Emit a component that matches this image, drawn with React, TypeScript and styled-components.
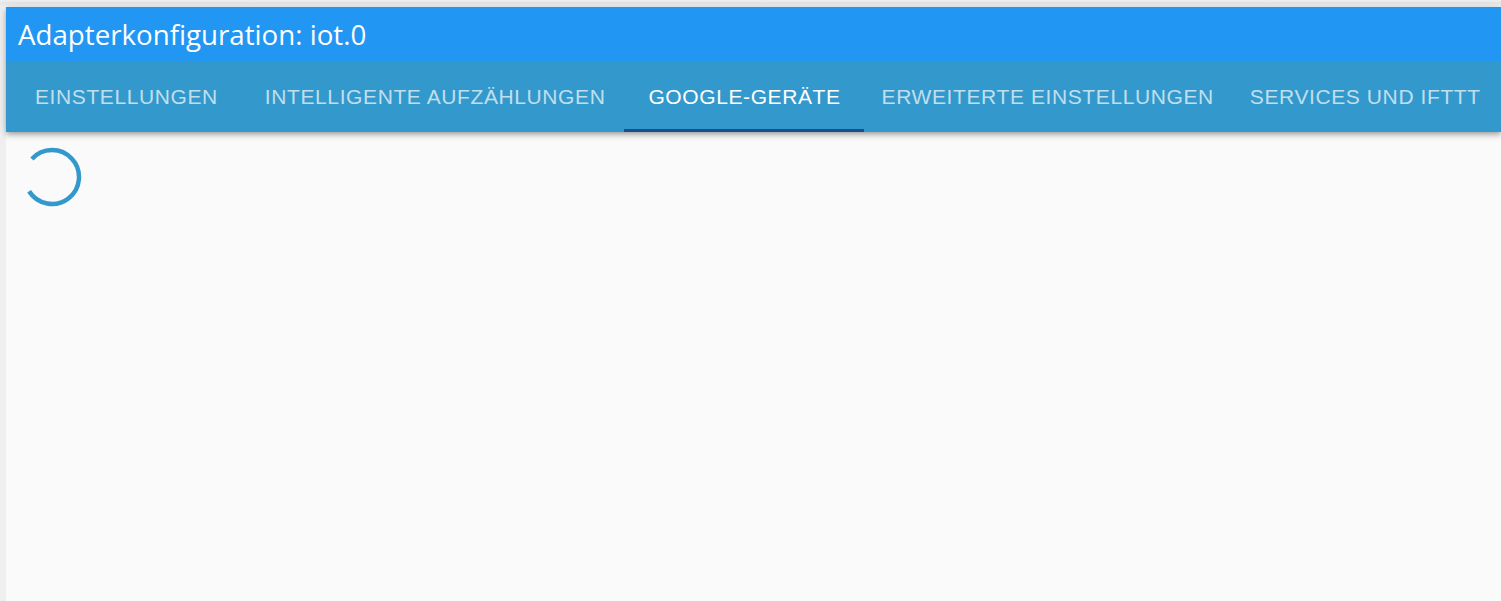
import React from 'react';
import styled, { createGlobalStyle } from 'styled-components';

const GlobalStyle = createGlobalStyle`
  html, body {
    margin: 0;
    padding: 0;
    background: #efefef;
  }
  #root {
    height: 601px;
  }
`;

// label plus the horizontal padding each tab gets in the reference layout
const TABS = [
  { label: 'Einstellungen', pl: 29, pr: 23 },
  { label: 'Intelligente Aufzählungen', pl: 24, pr: 19 },
  { label: 'Google-Geräte', pl: 24, pr: 23 },
  { label: 'Erweiterte Einstellungen', pl: 18, pr: 19 },
  { label: 'Services und IFTTT', pl: 17, pr: 18 },
];
const ACTIVE_TAB = 2;

const Page = styled.div`
  height: 601px;
  padding: 7px 0 0 6px;
  box-sizing: border-box;
  background: linear-gradient(180deg, #f1f1f1 0px, #e6e6e6 3px, #ececec 5px, #efefef 7px);
  display: flex;
  overflow: hidden;
`;

const Window = styled.div`
  flex: 1;
  display: flex;
  flex-direction: column;
  background: #fafafa;
`;

const AppBar = styled.header`
  display: flex;
  flex-direction: column;
  box-shadow: 0 2px 4px -1px rgba(0, 0, 0, 0.2), 0 4px 5px 0 rgba(0, 0, 0, 0.14), 0 1px 10px 0 rgba(0, 0, 0, 0.12);
  position: relative;
  z-index: 1;
`;

const TitleBar = styled.div`
  height: 54px;
  background: #2196f3;
  display: flex;
  align-items: center;
  padding: 0 12px;
  color: #fff;
  font-family: 'Open Sans', 'Noto Sans', sans-serif;
  font-size: 27.7px;
`;

const TabBar = styled.nav`
  height: 71px;
  background: #3399cc;
  display: flex;
  align-items: stretch;
`;

const Tab = styled.div<{ $active?: boolean; $pl: number; $pr: number }>`
  position: relative;
  display: flex;
  align-items: center;
  padding: 0 ${({ $pr }) => $pr}px 0 ${({ $pl }) => $pl}px;
  font-family: 'Liberation Sans', Arial, sans-serif;
  font-size: 21px;
  letter-spacing: 0.6px;
  text-transform: uppercase;
  color: ${({ $active }) => ($active ? '#ffffff' : 'rgba(255, 255, 255, 0.7)')};
  white-space: nowrap;

  &::after {
    content: '';
    position: absolute;
    left: 0;
    right: 0;
    bottom: 0;
    height: 3px;
    background: ${({ $active }) => ($active ? '#1d4e89' : 'transparent')};
  }
`;

const Content = styled.main`
  flex: 1;
  padding: 15px 0 0 16px;
`;

const Spinner = () => {
  const r = 27;
  const cx = 30;
  const cy = 30;
  const a1 = (-138 * Math.PI) / 180;
  const a2 = (148 * Math.PI) / 180;
  const x1 = cx + r * Math.cos(a1);
  const y1 = cy + r * Math.sin(a1);
  const x2 = cx + r * Math.cos(a2);
  const y2 = cy + r * Math.sin(a2);
  return (
    <svg width='60' height='60' viewBox='0 0 60 60'>
      <path d={`M ${x1} ${y1} A ${r} ${r} 0 1 1 ${x2} ${y2}`} fill='none' stroke='#3399cc' strokeWidth='4.5' />
    </svg>
  );
};

export default function App() {
  return (
    <>
      <GlobalStyle />
      <Page>
        <Window>
          <AppBar>
            <TitleBar>Adapterkonfiguration: iot.0</TitleBar>
            <TabBar>
              {TABS.map((t, i) => (
                <Tab key={t.label} $active={i === ACTIVE_TAB} $pl={t.pl} $pr={t.pr}>
                  {t.label}
                </Tab>
              ))}
            </TabBar>
          </AppBar>
          <Content>
            <Spinner />
          </Content>
        </Window>
      </Page>
    </>
  );
}
